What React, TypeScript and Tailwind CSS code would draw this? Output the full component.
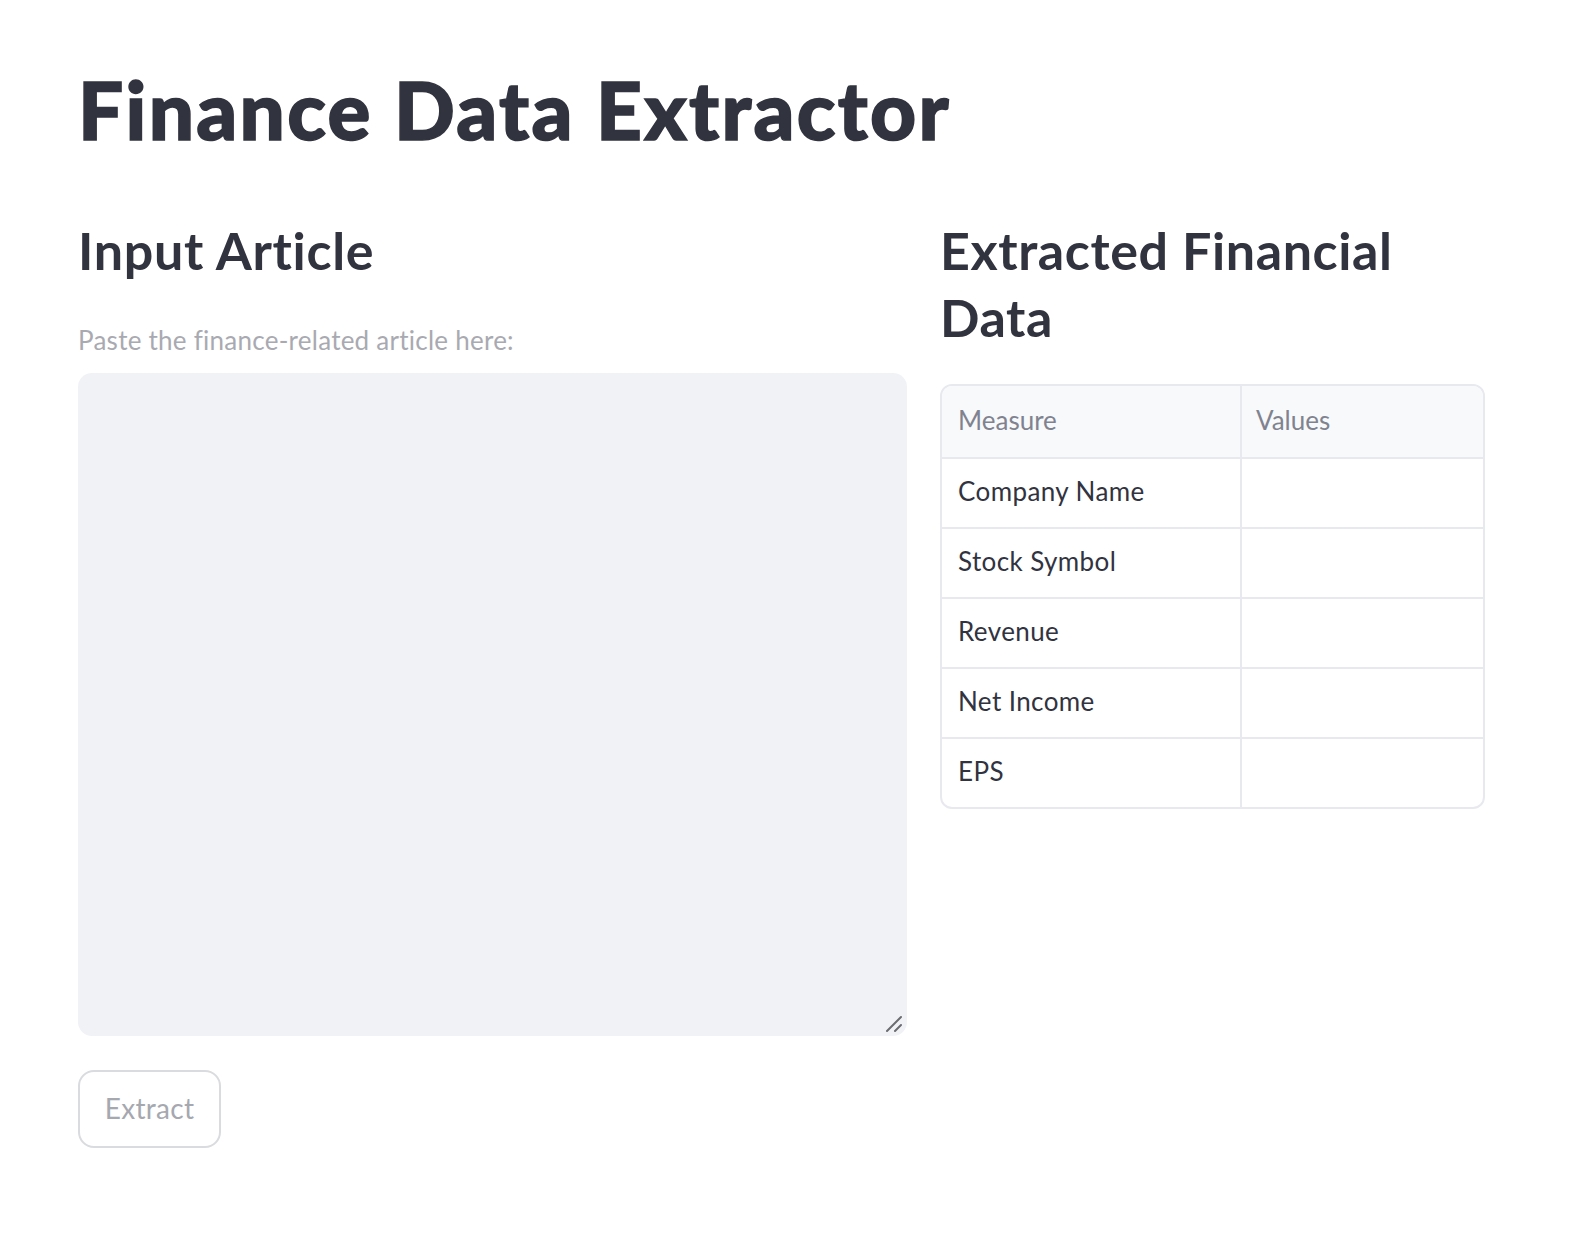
import { useState } from 'react';

const rows = ['Company Name', 'Stock Symbol', 'Revenue', 'Net Income', 'EPS'];

/* ── Bảng dữ liệu tài chính ── */
const DataTable = () => (
  <div className="overflow-hidden rounded-[12px] border-2 border-[#e8e9ee]">
    <div className="grid h-[71px] grid-cols-[300px_1fr] bg-[#f8f9fb] text-[26px] text-[#80838f]">
      <div className="flex items-center border-r-2 border-[#e8e9ee] pb-[2px] pl-[16px]">Measure</div>
      <div className="flex items-center pb-[2px] pl-[14px]">Values</div>
    </div>
    {rows.map((r) => (
      <div key={r} className="grid h-[70px] grid-cols-[300px_1fr] border-t-2 border-[#e8e9ee] text-[26px] tracking-[0.4px] text-[#31333f]">
        <div className="flex items-center border-r-2 border-[#e8e9ee] pb-[4px] pl-[16px]">{r}</div>
        <div />
      </div>
    ))}
  </div>
);

export default function App() {
  const [text, setText] = useState('');

  return (
    <div className="min-h-screen bg-white text-[#31333f]" style={{ fontFamily: 'Lato, "Noto Sans", sans-serif' }}>
      <div className="ml-[78px] w-[1407px] pt-[61px]">
        <h1 className="text-[80px] font-black leading-[96px] tracking-[2.3px] [-webkit-text-stroke:1.5px_#31333f]">
          Finance Data Extractor
        </h1>

        <div className="mt-[60px] grid grid-cols-[829px_545px] gap-x-[33px]">
          {/* Cột trái */}
          <div className="flex flex-col">
            <h2 className="text-[52px] font-bold leading-[67px] tracking-[0.7px]">Input Article</h2>
            <label className="mt-[38px] text-[26px] leading-[36px] tracking-[0.25px] text-[#a9aab1]">
              Paste the finance-related article here:
            </label>
            <div className="relative mt-[15px]">
              <textarea
                value={text}
                onChange={(e) => setText(e.target.value)}
                className="block h-[663px] w-full resize-none rounded-[14px] bg-[#f0f2f6] p-4 text-[26px] outline-none"
              />
              <svg className="pointer-events-none absolute bottom-[3px] right-[4px]" width="18" height="18" viewBox="0 0 18 18">
                <path d="M2 16 L16 2 M10 16 L16 10" stroke="#6b6c72" strokeWidth="2" strokeLinecap="round" />
              </svg>
            </div>
            <button className="mt-[34px] flex h-[78px] w-[143px] items-center justify-center rounded-[16px] border-2 border-[#dadbde] pb-[2px] text-[28px] tracking-[0.3px] text-[#a6a8b0]">
              Extract
            </button>
          </div>

          {/* Cột phải */}
          <div className="flex flex-col">
            <h2 className="text-[52px] font-bold leading-[67px] tracking-[0.6px]">
              Extracted Financial
              <br />
              Data
            </h2>
            <div className="mt-[33px]">
              <DataTable />
            </div>
          </div>
        </div>
      </div>
    </div>
  );
}
